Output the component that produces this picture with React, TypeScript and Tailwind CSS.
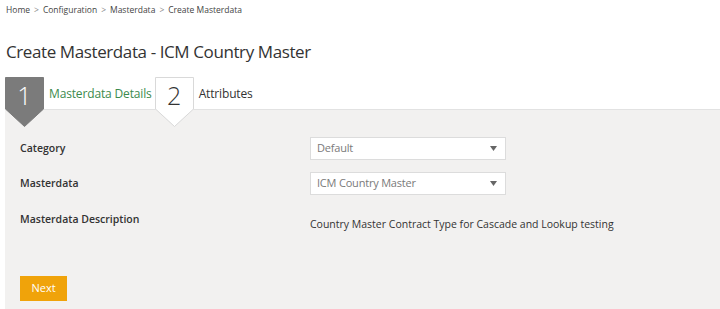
import React from 'react';

function StepBadge({ n, active }: { n: number; active: boolean }) {
  return (
    <div className="relative w-[39px] h-[32px] shrink-0">
      <svg className="absolute left-0 top-0 z-10 overflow-visible" width="39" height="50" viewBox="0 0 39 50">
        <path
          d="M0.5 0.5 H38.5 V32 L19.5 49.5 L0.5 32 Z"
          fill={active ? '#7b7b7b' : '#ffffff'}
          stroke={active ? '#7b7b7b' : '#d9d9d9'}
          strokeWidth="1"
        />
      </svg>
      <span
        className={`absolute inset-x-0 top-[3px] z-20 text-center text-[25px] leading-[30px] font-light ${
          active ? 'text-white' : 'text-[#333]'
        }`}
      >
        {n}
      </span>
    </div>
  );
}

function Select({ value }: { value: string }) {
  return (
    <div className="flex h-[23px] w-[196px] items-center justify-between border border-[#dcdcdc] bg-white pl-[6px] pr-[8px] text-[11px] tracking-[-0.2px] text-[#7a7a7a]">
      <span>{value}</span>
      <svg width="7" height="5" viewBox="0 0 7 5">
        <path d="M0 0 H7 L3.5 5 Z" fill="#666" />
      </svg>
    </div>
  );
}

export default function App() {
  return (
    <div className="flex h-[309px] w-[720px] flex-col overflow-hidden bg-white font-['Open_Sans',sans-serif] text-[#333]">
      <div className="flex items-center gap-[4px] px-[6px] pt-[4px] text-[8.5px] leading-[12px] text-[#444]">
        <span>Home</span>
        <span className="text-[#888]">&gt;</span>
        <span>Configuration</span>
        <span className="text-[#888]">&gt;</span>
        <span>Masterdata</span>
        <span className="text-[#888]">&gt;</span>
        <span>Create Masterdata</span>
      </div>

      <h1 className="mt-[23px] px-[6px] text-[17px] leading-[26px] font-normal tracking-[-0.4px] text-[#333]">
        Create Masterdata - ICM Country Master
      </h1>

      <div className="mt-[12px] flex h-[32px] items-start px-[5px]">
        <StepBadge n={1} active />
        <span className="ml-[5px] mt-[9px] text-[12px] leading-[16px] tracking-[-0.15px] text-[#3b8a4d]">
          Masterdata Details
        </span>
        <div className="ml-[3px]">
          <StepBadge n={2} active={false} />
        </div>
        <span className="ml-[5px] mt-[9px] text-[12px] leading-[16px] tracking-[-0.15px] text-[#333]">Attributes</span>
      </div>

      <div className="ml-[5px] flex flex-1 flex-col border-t border-[#e2e2e2] bg-[#f2f1f0] px-[15px] pt-[27px]">
        <div className="flex h-[23px] items-center">
          <span className="w-[290px] text-[10.5px] font-semibold">Category</span>
          <Select value="Default" />
        </div>
        <div className="mt-[12px] flex h-[23px] items-center">
          <span className="w-[290px] text-[10.5px] font-semibold">Masterdata</span>
          <Select value="ICM Country Master" />
        </div>
        <div className="mt-[16px] flex items-start">
          <span className="w-[290px] text-[10.5px] font-semibold leading-[16px]">Masterdata Description</span>
          <span className="mt-[5px] text-[10.5px] leading-[16px] text-[#333]">
            Country Master Contract Type for Cascade and Lookup testing
          </span>
        </div>
        <div className="mt-[42px]">
          <button className="h-[25px] w-[47px] bg-[#f0a30a] text-[11px] text-white">Next</button>
        </div>
      </div>
    </div>
  );
}
